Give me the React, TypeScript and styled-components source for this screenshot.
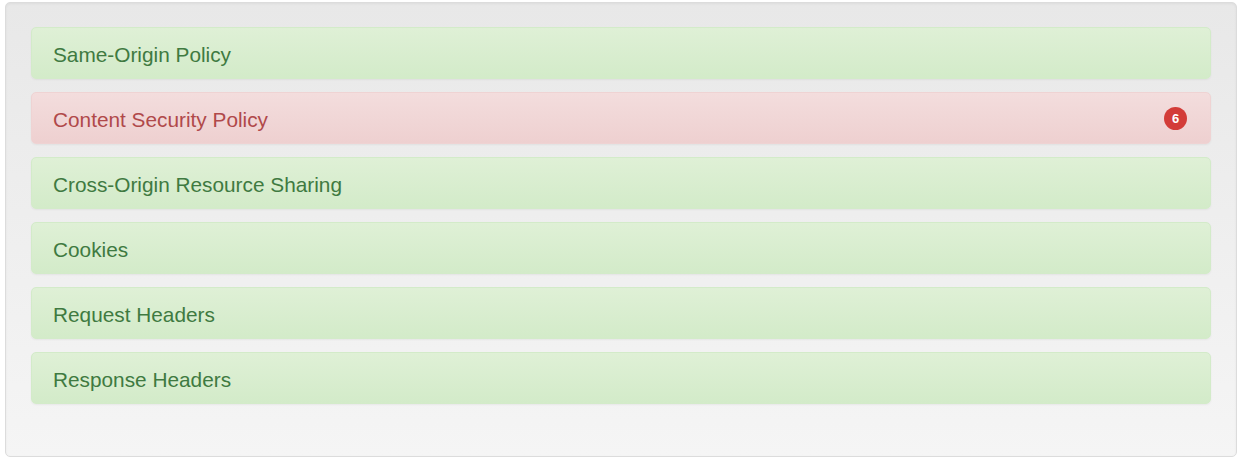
import React from "react";
import styled, { createGlobalStyle } from "styled-components";

const Global = createGlobalStyle`
  html, body { margin: 0; padding: 0; background: #ffffff; }
  body { font-family: "Liberation Sans", Arial, Helvetica, sans-serif; }
`;

const Well = styled.div`
  box-sizing: border-box;
  margin: 2px 6px 0 5px;
  width: 1232px;
  height: 455px;
  padding: 24px 25px 0 25px;
  border: 1px solid #dcdcdc;
  border-radius: 5px;
  background: linear-gradient(to bottom, #e8e8e8 0%, #f5f5f5 100%);
  box-shadow: inset 0 1px 3px rgba(0, 0, 0, 0.05), 0 1px 0 rgba(255, 255, 255, 0.1);
  display: flex;
  flex-direction: column;
  gap: 13px;
`;

type Tone = "ok" | "bad";

const Row = styled.div<{ $tone: Tone }>`
  box-sizing: border-box;
  height: 52px;
  padding: 3px 21px 0;
  display: flex;
  align-items: center;
  justify-content: space-between;
  border-radius: 5px;
  border: 1px solid ${(p) => (p.$tone === "ok" ? "#d3ebc9" : "#efd3d3")};
  background: ${(p) =>
    p.$tone === "ok"
      ? "linear-gradient(to bottom, #dff0d6 0%, #d3ebc9 100%)"
      : "linear-gradient(to bottom, #f3dddd 0%, #eed0d0 100%)"};
  box-shadow: 0 1px 2px rgba(0, 0, 0, 0.05);
  color: ${(p) => (p.$tone === "ok" ? "#3f7a41" : "#b0494a")};
  font-size: 20.8px;
`;

const Badge = styled.span`
  width: 23px;
  height: 23px;
  margin: -3px 2px 0 0;
  border-radius: 50%;
  background: #d33c38;
  color: #fff;
  font-size: 13px;
  font-weight: bold;
  display: flex;
  align-items: center;
  justify-content: center;
`;

const items: { label: string; tone: Tone; count?: number }[] = [
  { label: "Same-Origin Policy", tone: "ok" },
  { label: "Content Security Policy", tone: "bad", count: 6 },
  { label: "Cross-Origin Resource Sharing", tone: "ok" },
  { label: "Cookies", tone: "ok" },
  { label: "Request Headers", tone: "ok" },
  { label: "Response Headers", tone: "ok" },
];

export default function App() {
  return (
    <>
      <Global />
      <Well>
        {items.map((it) => (
          <Row key={it.label} $tone={it.tone}>
            <span>{it.label}</span>
            {it.count !== undefined && <Badge>{it.count}</Badge>}
          </Row>
        ))}
      </Well>
    </>
  );
}
